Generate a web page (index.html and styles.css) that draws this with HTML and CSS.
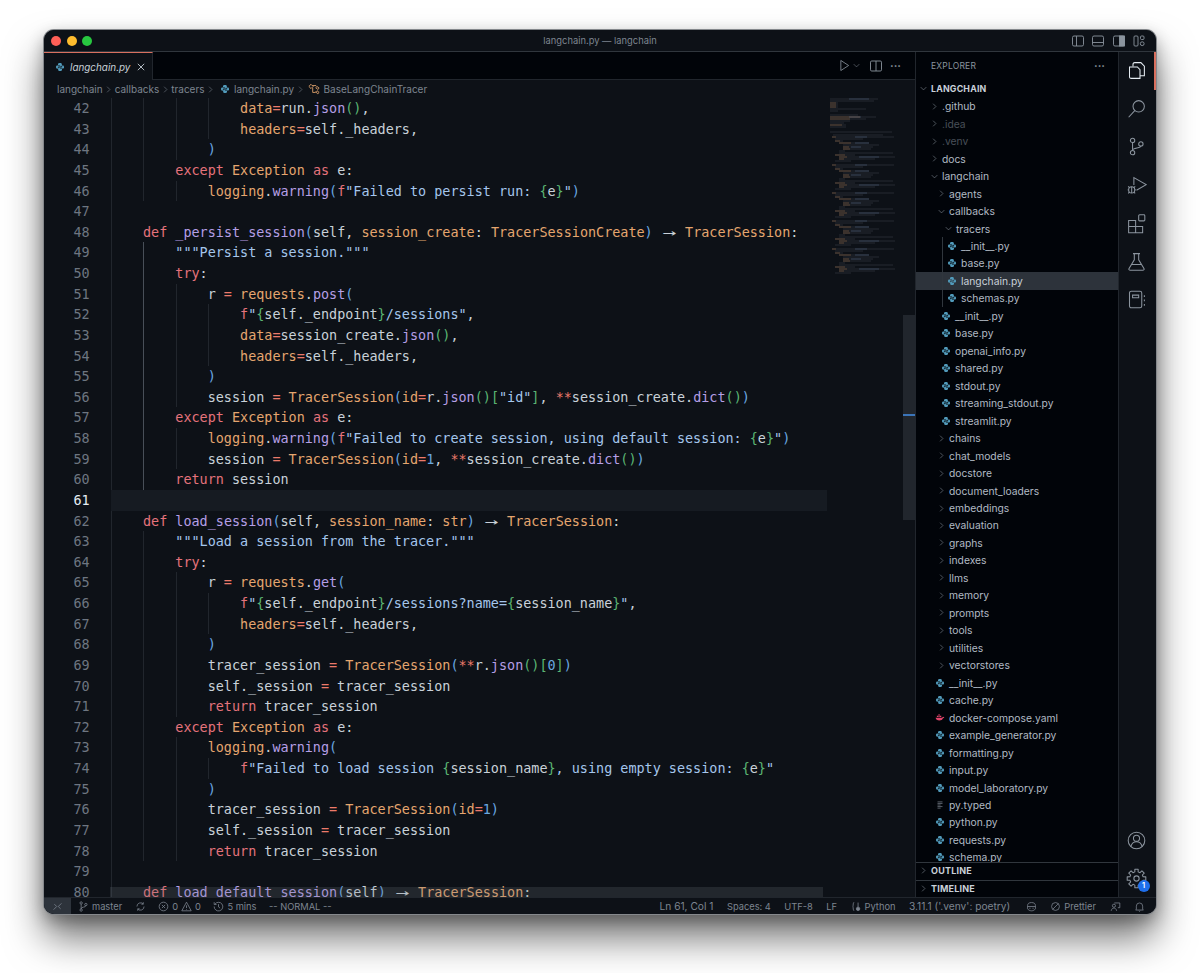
FILE: index.html
```html
<!DOCTYPE html>
<html lang="en">

<head>
    <meta charset="UTF-8">
    <title>langchain.py — langchain</title>
    <link rel="stylesheet" href="styles.css">
</head>

<body>
    <svg class="defs" width="0" height="0">
        <symbol id="py" viewBox="0 0 16 16">
            <path d="M8 1.5c-2.2 0-3.2.7-3.2 2.1v1.3h3.4v.7H3.7c-1.4 0-2.2 1-2.2 2.5 0 1.4.7 2.5 1.9 2.5h1.2V9c0-1 .8-1.7 1.8-1.7h3c.9 0 1.6-.7 1.6-1.6V3.6c0-1.4-1.2-2.1-3-2.1z" />
            <g transform="rotate(180 8 8)">
                <path d="M8 1.5c-2.2 0-3.2.7-3.2 2.1v1.3h3.4v.7H3.7c-1.4 0-2.2 1-2.2 2.5 0 1.4.7 2.5 1.9 2.5h1.2V9c0-1 .8-1.7 1.8-1.7h3c.9 0 1.6-.7 1.6-1.6V3.6c0-1.4-1.2-2.1-3-2.1z" />
            </g>
        </symbol>
        <symbol id="right" viewBox="0 0 16 16">
            <path d="M5.5 3l5 5-5 5" fill="none" stroke="currentColor" />
        </symbol>
        <symbol id="down" viewBox="0 0 16 16">
            <path d="M3 5.5l5 5 5-5" fill="none" stroke="currentColor" />
        </symbol>
        <symbol id="cog" viewBox="0 0 16 16">
            <polygon transform="translate(8 8)" fill="none" stroke="currentColor" stroke-width=".8" stroke-linejoin="round" points="-1.26,-5.04 -1.25,-7.09 1.25,-7.09 1.26,-5.04 2.67,-4.45 4.13,-5.9 5.9,-4.13 4.45,-2.67 5.04,-1.26 7.09,-1.25 7.09,1.25 5.04,1.26 4.45,2.67 5.9,4.13 4.13,5.9 2.67,4.45 1.26,5.04 1.25,7.09 -1.25,7.09 -1.26,5.04 -2.67,4.45 -4.13,5.9 -5.9,4.13 -4.45,2.67 -5.04,1.26 -7.09,1.25 -7.09,-1.25 -5.04,-1.26 -4.45,-2.67 -5.9,-4.13 -4.13,-5.9 -2.67,-4.45" />
            <circle cx="8" cy="8" r="2" fill="none" stroke="currentColor" stroke-width=".8" />
        </symbol>
    </svg>

    <div class="window">
        <div class="titlebar">
            <div class="lights"><i class="red"></i><i class="yellow"></i><i class="green"></i></div>
            <div class="title">langchain.py — langchain</div>
            <div class="layout-icons">
                <svg viewBox="0 0 14 14"><rect x="1.5" y="2" width="11" height="10" rx="1.5" /><path d="M5.5 2v10" /></svg>
                <svg viewBox="0 0 14 14"><rect x="1.5" y="2" width="11" height="10" rx="1.5" /><path d="M1.5 8.5h11" /></svg>
                <svg viewBox="0 0 14 14"><rect x="1.5" y="2" width="11" height="10" rx="1.5" /><rect class="fill" x="7.5" y="2" width="5" height="10" /></svg>
                <svg viewBox="0 0 14 14"><rect x="2" y="2" width="4" height="10" rx="1" /><rect x="8.5" y="2" width="3.5" height="3.5" rx="1" /><circle cx="10.2" cy="9.7" r="1.9" /></svg>
            </div>
        </div>

        <div class="main">
            <div class="editor">
                <div class="tabs">
                    <div class="tab">
                        <svg class="py"><use href="#py" /></svg>
                        <span class="tab-name">langchain.py</span>
                        <svg class="tab-close" viewBox="0 0 10 10"><path d="M1 1l8 8M9 1l-8 8" /></svg>
                    </div>
                    <div class="tab-actions">
                        <svg class="play" viewBox="0 0 12 14"><path d="M2 1.5l8.5 5.5L2 12.5z" /></svg>
                        <svg class="play-more"><use href="#down" /></svg>
                        <svg class="split" viewBox="0 0 14 14"><rect x="1.5" y="2" width="11" height="10" rx="1.2" /><path d="M7 2v10" /></svg>
                        <span class="dots">···</span>
                    </div>
                </div>
                <div class="crumbs">
                    <span>langchain</span>
                    <svg class="sep"><use href="#right" /></svg>
                    <span>callbacks</span>
                    <svg class="sep"><use href="#right" /></svg>
                    <span>tracers</span>
                    <svg class="sep"><use href="#right" /></svg>
                    <svg class="py"><use href="#py" /></svg>
                    <span>langchain.py</span>
                    <svg class="sep"><use href="#right" /></svg>
                    <svg class="class-icon" viewBox="0 0 14 14"><path d="M1 4l2.500-2.500L6 4 3.500 6.500zM9 5.500l1.500-1.500L13 6l-1.500 1.500zM9 10.500L10.500 9l2.500 2-1.500 1.500zM5 3h4.500M5.500 5.500V11H9" /></svg>
                    <span>BaseLangChainTracer</span>
                </div>

                <div class="code-area">
                    <div class="code">
                        <div class="line"><span class="num">42</span><div class="src g4">                <span class="p">data</span><span class="o">=</span>run.<span class="f">json</span><span class="g">()</span>,</div></div>
                        <div class="line"><span class="num">43</span><div class="src g4">                <span class="p">headers</span><span class="o">=</span>self._headers,</div></div>
                        <div class="line"><span class="num">44</span><div class="src g3">            <span class="b">)</span></div></div>
                        <div class="line"><span class="num">45</span><div class="src g2">        <span class="k">except</span> <span class="c">Exception</span> <span class="k">as</span> e:</div></div>
                        <div class="line"><span class="num">46</span><div class="src g3">            <span class="c">logging</span>.<span class="f">warning</span><span class="b">(</span><span class="k">f</span><span class="s">"Failed to persist run: </span><span class="g">{</span>e<span class="g">}</span><span class="s">"</span><span class="b">)</span></div></div>
                        <div class="line"><span class="num">47</span><div class="src g1"></div></div>
                        <div class="line"><span class="num">48</span><div class="src g1">    <span class="k">def</span> <span class="f">_persist_session</span><span class="b">(</span>self, <span class="p">session_create</span>: <span class="c">TracerSessionCreate</span><span class="b">)</span> <span class="arrow">→</span> <span class="c">TracerSession</span>:</div></div>
                        <div class="line"><span class="num">49</span><div class="src g2 act">        <span class="s">"""Persist a session."""</span></div></div>
                        <div class="line"><span class="num">50</span><div class="src g2 act">        <span class="k">try</span>:</div></div>
                        <div class="line"><span class="num">51</span><div class="src g3 act">            r <span class="o">=</span> <span class="c">requests</span>.<span class="f">post</span><span class="b">(</span></div></div>
                        <div class="line"><span class="num">52</span><div class="src g4 act">                <span class="k">f</span><span class="s">"</span><span class="g">{</span>self._endpoint<span class="g">}</span><span class="s">/sessions"</span>,</div></div>
                        <div class="line"><span class="num">53</span><div class="src g4 act">                <span class="p">data</span><span class="o">=</span>session_create.<span class="f">json</span><span class="g">()</span>,</div></div>
                        <div class="line"><span class="num">54</span><div class="src g4 act">                <span class="p">headers</span><span class="o">=</span>self._headers,</div></div>
                        <div class="line"><span class="num">55</span><div class="src g3 act">            <span class="b">)</span></div></div>
                        <div class="line"><span class="num">56</span><div class="src g3 act">            session <span class="o">=</span> <span class="c">TracerSession</span><span class="b">(</span><span class="p">id</span><span class="o">=</span>r.<span class="f">json</span><span class="g">()[</span><span class="s">"id"</span><span class="g">]</span>, <span class="o">**</span>session_create.<span class="f">dict</span><span class="g">()</span><span class="b">)</span></div></div>
                        <div class="line"><span class="num">57</span><div class="src g2 act">        <span class="k">except</span> <span class="c">Exception</span> <span class="k">as</span> e:</div></div>
                        <div class="line"><span class="num">58</span><div class="src g3 act">            <span class="c">logging</span>.<span class="f">warning</span><span class="b">(</span><span class="k">f</span><span class="s">"Failed to create session, using default session: </span><span class="g">{</span>e<span class="g">}</span><span class="s">"</span><span class="b">)</span></div></div>
                        <div class="line"><span class="num">59</span><div class="src g3 act">            session <span class="o">=</span> <span class="c">TracerSession</span><span class="b">(</span><span class="p">id</span><span class="o">=</span><span class="b">1</span>, <span class="o">**</span>session_create.<span class="f">dict</span><span class="g">()</span><span class="b">)</span></div></div>
                        <div class="line"><span class="num">60</span><div class="src g2 act">        <span class="k">return</span> session</div></div>
                        <div class="line current"><span class="num">61</span><div class="src"></div></div>
                        <div class="line"><span class="num">62</span><div class="src g1">    <span class="k">def</span> <span class="f">load_session</span><span class="b">(</span>self, <span class="p">session_name</span>: <span class="c">str</span><span class="b">)</span> <span class="arrow">→</span> <span class="c">TracerSession</span>:</div></div>
                        <div class="line"><span class="num">63</span><div class="src g2">        <span class="s">"""Load a session from the tracer."""</span></div></div>
                        <div class="line"><span class="num">64</span><div class="src g2">        <span class="k">try</span>:</div></div>
                        <div class="line"><span class="num">65</span><div class="src g3">            r <span class="o">=</span> <span class="c">requests</span>.<span class="f">get</span><span class="b">(</span></div></div>
                        <div class="line"><span class="num">66</span><div class="src g4">                <span class="k">f</span><span class="s">"</span><span class="g">{</span>self._endpoint<span class="g">}</span><span class="s">/sessions?name=</span><span class="g">{</span>session_name<span class="g">}</span><span class="s">"</span>,</div></div>
                        <div class="line"><span class="num">67</span><div class="src g4">                <span class="p">headers</span><span class="o">=</span>self._headers,</div></div>
                        <div class="line"><span class="num">68</span><div class="src g3">            <span class="b">)</span></div></div>
                        <div class="line"><span class="num">69</span><div class="src g3">            tracer_session <span class="o">=</span> <span class="c">TracerSession</span><span class="b">(</span><span class="o">**</span>r.<span class="f">json</span><span class="g">()[</span><span class="b">0</span><span class="g">]</span><span class="b">)</span></div></div>
                        <div class="line"><span class="num">70</span><div class="src g3">            self._session <span class="o">=</span> tracer_session</div></div>
                        <div class="line"><span class="num">71</span><div class="src g3">            <span class="k">return</span> tracer_session</div></div>
                        <div class="line"><span class="num">72</span><div class="src g2">        <span class="k">except</span> <span class="c">Exception</span> <span class="k">as</span> e:</div></div>
                        <div class="line"><span class="num">73</span><div class="src g3">            <span class="c">logging</span>.<span class="f">warning</span><span class="b">(</span></div></div>
                        <div class="line"><span class="num">74</span><div class="src g4">                <span class="k">f</span><span class="s">"Failed to load session </span><span class="g">{</span>session_name<span class="g">}</span><span class="s">, using empty session: </span><span class="g">{</span>e<span class="g">}</span><span class="s">"</span></div></div>
                        <div class="line"><span class="num">75</span><div class="src g3">            <span class="b">)</span></div></div>
                        <div class="line"><span class="num">76</span><div class="src g3">            tracer_session <span class="o">=</span> <span class="c">TracerSession</span><span class="b">(</span><span class="p">id</span><span class="o">=</span><span class="b">1</span><span class="b">)</span></div></div>
                        <div class="line"><span class="num">77</span><div class="src g3">            self._session <span class="o">=</span> tracer_session</div></div>
                        <div class="line"><span class="num">78</span><div class="src g3">            <span class="k">return</span> tracer_session</div></div>
                        <div class="line"><span class="num">79</span><div class="src g1"></div></div>
                        <div class="line"><span class="num">80</span><div class="src g1">    <span class="k">def</span> <span class="f">load_default_session</span><span class="b">(</span>self<span class="b">)</span> <span class="arrow">→</span> <span class="c">TracerSession</span>:</div></div>
                        <div class="hscroll"></div>
                    </div>

                    <div class="minimap">
                        <svg viewBox="0 0 76 180" width="76" height="180">
                            <defs>
                                <g id="mini-block">
                                    <path class="m-grey" d="M5 1h62M8 3h28M8 5h8M12 7h30M16 9h36M16 11h30M16 13h28M12 15h6M12 17h54M8 19h20M12 21h56M12 23h36M8 25h16" />
                                    <path class="m-orange" d="M5 1h4M8 5h5M12 7h12M16 11h6M16 13h7M8 19h10M12 21h8M12 23h5" />
                                    <path class="m-blue" d="M28 1h12M28 7h14M24 11h10M32 21h20" />
                                </g>
                            </defs>
                            <path class="m-grey" d="M3 1h48M3 3h44M3 5h8M3 7h8M3 9h8M3 11h36M3 13h8M3 17h28M3 19h46M3 21h36M3 23h20M3 25h14M3 27h16M3 29h16" />
                            <path class="m-orange" d="M3 5h6M3 7h6M3 9h6M3 19h30M3 21h20M3 27h12" />
                            <path class="m-blue" d="M22 1h20M22 19h12" />
                            <path class="m-grey" d="M3 34h62M6 37h50" />
                            <use href="#mini-block" y="38" />
                            <use href="#mini-block" y="66" />
                            <use href="#mini-block" y="94" />
                            <use href="#mini-block" y="122" />
                            <use href="#mini-block" y="150" />
                        </svg>
                    </div>
                    <div class="scrollbar">
                        <div class="slider"></div>
                        <div class="cursor-mark"></div>
                    </div>
                </div>
            </div>

            <div class="sidebar">
                <div class="side-head"><span>EXPLORER</span><span class="dots">···</span></div>
                <div class="root"><svg class="chev"><use href="#down" /></svg>LANGCHAIN</div>
                <div class="tree">
                    <div class="row d1"><svg class="chev"><use href="#right" /></svg>.github</div>
                    <div class="row d1 dim"><svg class="chev"><use href="#right" /></svg>.idea</div>
                    <div class="row d1 dim"><svg class="chev"><use href="#right" /></svg>.venv</div>
                    <div class="row d1"><svg class="chev"><use href="#right" /></svg>docs</div>
                    <div class="row d1"><svg class="chev"><use href="#down" /></svg>langchain</div>
                    <div class="row d2"><svg class="chev"><use href="#right" /></svg>agents</div>
                    <div class="row d2"><svg class="chev"><use href="#down" /></svg>callbacks</div>
                    <div class="row d3"><svg class="chev"><use href="#down" /></svg>tracers</div>
                    <div class="row f3 guide"><svg class="py"><use href="#py" /></svg>__init__.py</div>
                    <div class="row f3 guide"><svg class="py"><use href="#py" /></svg>base.py</div>
                    <div class="row f3 guide selected"><svg class="py"><use href="#py" /></svg>langchain.py</div>
                    <div class="row f3 guide"><svg class="py"><use href="#py" /></svg>schemas.py</div>
                    <div class="row f2"><svg class="py"><use href="#py" /></svg>__init__.py</div>
                    <div class="row f2"><svg class="py"><use href="#py" /></svg>base.py</div>
                    <div class="row f2"><svg class="py"><use href="#py" /></svg>openai_info.py</div>
                    <div class="row f2"><svg class="py"><use href="#py" /></svg>shared.py</div>
                    <div class="row f2"><svg class="py"><use href="#py" /></svg>stdout.py</div>
                    <div class="row f2"><svg class="py"><use href="#py" /></svg>streaming_stdout.py</div>
                    <div class="row f2"><svg class="py"><use href="#py" /></svg>streamlit.py</div>
                    <div class="row d2"><svg class="chev"><use href="#right" /></svg>chains</div>
                    <div class="row d2"><svg class="chev"><use href="#right" /></svg>chat_models</div>
                    <div class="row d2"><svg class="chev"><use href="#right" /></svg>docstore</div>
                    <div class="row d2"><svg class="chev"><use href="#right" /></svg>document_loaders</div>
                    <div class="row d2"><svg class="chev"><use href="#right" /></svg>embeddings</div>
                    <div class="row d2"><svg class="chev"><use href="#right" /></svg>evaluation</div>
                    <div class="row d2"><svg class="chev"><use href="#right" /></svg>graphs</div>
                    <div class="row d2"><svg class="chev"><use href="#right" /></svg>indexes</div>
                    <div class="row d2"><svg class="chev"><use href="#right" /></svg>llms</div>
                    <div class="row d2"><svg class="chev"><use href="#right" /></svg>memory</div>
                    <div class="row d2"><svg class="chev"><use href="#right" /></svg>prompts</div>
                    <div class="row d2"><svg class="chev"><use href="#right" /></svg>tools</div>
                    <div class="row d2"><svg class="chev"><use href="#right" /></svg>utilities</div>
                    <div class="row d2"><svg class="chev"><use href="#right" /></svg>vectorstores</div>
                    <div class="row f1"><svg class="py"><use href="#py" /></svg>__init__.py</div>
                    <div class="row f1"><svg class="py"><use href="#py" /></svg>cache.py</div>
                    <div class="row f1"><svg class="py docker" viewBox="0 0 16 16"><path d="M1 7.5h10.5c.3-1 1-1.5 1.7-1.5.3.6 1.2.8 1.8.7-.4 1-1.2 1.6-2.2 1.7-1 2.4-3 3.6-5.8 3.6-3.4 0-5.600-1.700-6-4.500zM3 4.500h2v2H3zM5.500 4.500h2v2h-2zM8 4.500h2v2H8zM5.500 2h2v2h-2z" /></svg>docker-compose.yaml</div>
                    <div class="row f1"><svg class="py"><use href="#py" /></svg>example_generator.py</div>
                    <div class="row f1"><svg class="py"><use href="#py" /></svg>formatting.py</div>
                    <div class="row f1"><svg class="py"><use href="#py" /></svg>input.py</div>
                    <div class="row f1"><svg class="py"><use href="#py" /></svg>model_laboratory.py</div>
                    <div class="row f1"><svg class="py lines" viewBox="0 0 16 16"><path d="M4 3h8M4 5.500h8M4 8h5M4 10.500h8M4 13h5" /></svg>py.typed</div>
                    <div class="row f1"><svg class="py"><use href="#py" /></svg>python.py</div>
                    <div class="row f1"><svg class="py"><use href="#py" /></svg>requests.py</div>
                    <div class="row f1"><svg class="py"><use href="#py" /></svg>schema.py</div>
                </div>
                <div class="panel"><svg class="chev"><use href="#right" /></svg>OUTLINE</div>
                <div class="panel"><svg class="chev"><use href="#right" /></svg>TIMELINE</div>
            </div>

            <div class="activity">
                <div class="act-top">
                    <svg class="on" viewBox="0 0 24 24"><path d="M10 3h7l4 4v11h-5M10 3c-1 0-2 .5-2 2v2M4 8h9l3 3v10H6c-1.500 0-2-1-2-2z" /></svg>
                    <svg viewBox="0 0 24 24"><circle cx="14.500" cy="9.500" r="6.500" /><path d="M10 14.500L3 22" /></svg>
                    <svg viewBox="0 0 24 24"><circle cx="7.500" cy="5" r="2.500" /><circle cx="7.500" cy="19" r="2.500" /><circle cx="17" cy="9" r="2.500" /><path d="M7.500 7.500v9M17 11.500c0 3-9.500 1.500-9.500 5" /></svg>
                    <svg viewBox="0 0 24 24"><path d="M9 11.500V3l14 8-11 6.500" /><circle cx="6.500" cy="17" r="3.500" /><path d="M6.500 13.500v7M2 17h1M10 17h1M2.500 13l1.500 1.500M10.500 13L9 14.500M2.500 21L4 19.500M10.500 21L9 19.500" /></svg>
                    <svg viewBox="0 0 24 24"><path d="M3 8.500h8v14H3zM3 15.500h16v7h-8M11 8.500v7" /><rect x="14.500" y="2" width="7" height="7" rx="1" /></svg>
                    <svg viewBox="0 0 24 24"><path d="M8 3h8M9.500 3v7L3.500 20c-.5 1 0 2 1.500 2h14c1.500 0 2-1 1.500-2l-6-10V3M6.500 15.500h11" /></svg>
                    <svg viewBox="0 0 24 24"><rect x="4" y="2.500" width="14" height="19" rx="2" /><path d="M7.500 7h7v3h-7zM21 7v2M21 12v2M21 17v2" /></svg>
                </div>
                <div class="act-bottom">
                    <svg viewBox="0 0 24 24"><circle cx="12" cy="12" r="9.500" /><circle cx="12" cy="9.500" r="3.500" /><path d="M5.500 19c1-3.500 3.500-5.500 6.500-5.500s5.500 2 6.500 5.500" /></svg>
                    <div class="gear">
                        <svg><use href="#cog" /></svg>
                        <span class="badge">1</span>
                    </div>
                </div>
            </div>
        </div>

        <div class="status">
            <div class="remote"><svg viewBox="0 0 14 14"><path d="M2 11l4-4-3-3M12 3L8 7l3 3" /></svg></div>
            <div class="st-left">
                <span class="st-item"><svg viewBox="0 0 14 14"><circle cx="4" cy="2.500" r="1.500" /><circle cx="4" cy="11.500" r="1.500" /><circle cx="10" cy="4.500" r="1.500" /><path d="M4 4v6M10 6c0 2.500-6 1-6 4" /></svg>master</span>
                <span class="st-item"><svg viewBox="0 0 14 14"><path d="M2.500 7a4.500 4.500 0 0 1 8-3M11.500 7a4.500 4.500 0 0 1-8 3M10.500 1.500V4H8M3.500 12.500V10H6" /></svg></span>
                <span class="st-item"><svg viewBox="0 0 14 14"><circle cx="7" cy="7" r="5.500" /><path d="M5 5l4 4M9 5l-4 4" /></svg>0<svg viewBox="0 0 14 14"><path d="M7 1.500l6 11H1zM7 5.500v3.500M7 10.500v.8" /></svg>0</span>
                <span class="st-item"><svg viewBox="0 0 14 14"><path d="M2.500 4A5.500 5.500 0 1 1 1.500 7M1.500 1.500V4.500H4.500M7 4v3.500l2 1.500" /></svg>5 mins</span>
                <span class="st-item">-- NORMAL --</span>
            </div>
            <div class="st-right">
                <span class="wide">Ln 61, Col 1</span>
                <span>Spaces: 4</span>
                <span>UTF-8</span>
                <span>LF</span>
                <span class="st-item"><svg viewBox="0 0 14 14"><path d="M4 1.500C2.500 2 3 5 2.500 7 3 9 2.500 12 4 12.500" /><circle cx="9" cy="10" r="2.200" class="fill" /><path d="M9 2v6" /></svg>Python</span>
                <span class="wide">3.11.1 ('.venv': poetry)</span>
                <span class="st-item copilot"><svg viewBox="0 0 14 14"><path d="M2 6c0-3 2-4 5-4s5 1 5 4v4c-1 1.500-3 2.500-5 2.500S3 11.500 2 10zM2 7h10M5 8.500v1.500M9 8.500v1.500" /></svg></span>
                <span class="st-item"><svg viewBox="0 0 14 14"><circle cx="7" cy="7" r="5" /><path d="M3.500 10.500l7-7" /></svg>Prettier</span>
                <span class="st-item"><svg viewBox="0 0 14 14"><circle cx="5" cy="6" r="2" /><path d="M1.500 12.500c.5-2.500 2-3.500 3.500-3.500s3 1 3.500 3.500M5.500 2.500h7v6H10" /></svg></span>
                <span class="st-item"><svg viewBox="0 0 14 14"><path d="M3 10.500V6.500a4 4 0 0 1 8 0v4l1 1H2zM6 12.500c.3.800 1.700.800 2 0" /></svg></span>
            </div>
        </div>
    </div>
</body>

</html>
```

FILE: styles.css
```css
* {
    box-sizing: border-box;
}

html,
body {
    margin: 0;
    height: 973px;
    overflow: hidden;
    background: #fff;
}

body {
    padding: 30px 44px 0;
    font-family: Inter, "Noto Sans", sans-serif;
}

.defs {
    position: absolute;
}

.window {
    width: 1112px;
    height: 884px;
    display: flex;
    flex-direction: column;
    background: #0d1117;
    border-radius: 10px;
    overflow: hidden;
    box-shadow: 0 0 0 1px #85888c, 0 24px 38px rgba(0, 0, 0, .55), 0 6px 16px rgba(0, 0, 0, .3);
}

/* title bar */
.titlebar {
    height: 22px;
    flex: none;
    display: flex;
    align-items: center;
    justify-content: space-between;
    padding: 0 10px 0 7px;
    background: #0d1117;
    border-bottom: 1px solid #30363d;
    position: relative;
}

.lights {
    display: flex;
    gap: 5.5px;
    margin-top: 1px;
}

.lights i {
    width: 10px;
    height: 10px;
    border-radius: 50%;
}

.red {
    background: #ff5f57;
}

.yellow {
    background: #febc2e;
}

.green {
    background: #28c840;
}

.title {
    position: absolute;
    left: 0;
    right: 0;
    text-align: center;
    font-size: 9.35px;
    color: #7d8590;
}

.layout-icons {
    display: flex;
    gap: 6.5px;
}

.layout-icons svg {
    width: 14px;
    height: 14px;
    fill: none;
    stroke: #8b949e;
    stroke-width: .9;
}

.layout-icons .fill {
    fill: #8b949e;
}

.main {
    flex: 1;
    display: flex;
    min-height: 0;
}

/* editor */
.editor {
    width: 871px;
    flex: none;
    display: flex;
    flex-direction: column;
}

.tabs {
    height: 28px;
    flex: none;
    display: flex;
    justify-content: space-between;
    background: #010409;
    border-bottom: 1px solid #21262d;
}

.tab {
    width: 109px;
    height: 28px;
    display: flex;
    align-items: center;
    padding-left: 11px;
    background: #0d1117;
    border-top: 1px solid #d9705f;
    border-right: 1px solid #21262d;
}

.tab-name {
    font-size: 9.9px;
    font-style: italic;
    color: #c9d1d9;
    margin-left: 5px;
}

.py {
    width: 10px;
    height: 10px;
    flex: none;
    fill: #519aba;
}

.tab-close {
    width: 8px;
    height: 8px;
    margin-left: 7px;
    fill: none;
    stroke: #c9d1d9;
    stroke-width: 1.1;
}

.tab-actions {
    display: flex;
    align-items: center;
    padding-right: 14px;
    color: #8b949e;
}

.tab-actions svg {
    fill: none;
    stroke: #8b949e;
    stroke-width: .9;
}

.play {
    width: 11px;
    height: 13px;
}

.play-more {
    width: 9px;
    height: 9px;
    margin: 0 8px 0 2.5px;
}

.split {
    width: 14px;
    height: 14px;
}

.dots {
    font-size: 11px;
    font-weight: 700;
    color: #8b949e;
    margin-left: 6.5px;
}

.crumbs {
    height: 18px;
    flex: none;
    display: flex;
    align-items: center;
    gap: 1.5px;
    padding-left: 13px;
    font-size: 10px;
    color: #7d8590;
}

.sep {
    width: 9px;
    height: 9px;
    color: #7d8590;
}

.crumbs .py {
    margin: 0 3px;
}

.class-icon {
    width: 12px;
    height: 12px;
    margin: 0 2px;
    fill: none;
    stroke: #e5a66f;
    stroke-width: 1;
}

.code-area {
    flex: 1;
    min-height: 0;
    display: flex;
}

.code {
    width: 783px;
    flex: none;
    overflow: hidden;
    position: relative;
    font-family: "DejaVu Sans Mono", "Liberation Mono", monospace;
    font-size: 13.45px;
    color: #c9d1d9;
    --cw: 8.1px;
}

.line {
    display: flex;
    height: 20.63px;
    line-height: 20.63px;
}

.num {
    width: 66.6px;
    flex: none;
    padding: 1px 21px 0 0;
    text-align: right;
    color: #6e7681;
}

.src {
    flex: 1;
    padding-top: 1px;
    white-space: pre;
    background-image: repeating-linear-gradient(90deg, #21262d 0 1px, transparent 1px 32.4px);
    background-repeat: no-repeat;
    background-size: calc(var(--cw) * 4 * var(--n, 0)) 100%;
}

.g1 {
    --n: 1;
}

.g2 {
    --n: 2;
}

.g3 {
    --n: 3;
}

.g4 {
    --n: 4;
}

.src.act {
    background-image: linear-gradient(#484f58, #484f58), repeating-linear-gradient(90deg, #21262d 0 1px, transparent 1px 32.4px);
    background-position: 32.4px 0, 0 0;
    background-size: 1px 100%, calc(var(--cw) * 4 * var(--n, 0)) 100%;
}

.current .num {
    color: #e6edf3;
}

.current .src {
    background: #161b22;
}

.k {
    color: #e5737c;
}

.c,
.p {
    color: #e5a66f;
}

.f {
    color: #b59fe6;
}

.s {
    color: #a5c6ec;
}

.o {
    color: #ec7a6a;
}

.b {
    color: #6aa8e0;
}

.g {
    color: #5bb573;
}

.arrow {
    display: inline-block;
    width: 2ch;
    text-align: center;
    transform: scaleX(1.7);
}

.hscroll {
    position: absolute;
    left: 66px;
    right: 4px;
    bottom: 0;
    height: 10px;
    background: rgba(110, 118, 129, .22);
}

.minimap {
    width: 76px;
    flex: none;
    overflow: hidden;
}

.minimap svg {
    display: block;
    fill: none;
}

.m-grey {
    stroke: #6e7681;
    stroke-width: .6;
    opacity: .45;
}

.m-orange {
    stroke: #c98a55;
    stroke-width: .6;
    opacity: .65;
}

.m-blue {
    stroke: #7fa6d0;
    stroke-width: .6;
    opacity: .5;
}

.scrollbar {
    width: 12px;
    flex: none;
    position: relative;
}

.slider {
    position: absolute;
    top: 217px;
    left: 0;
    right: 0;
    height: 205px;
    background: #21262d;
}

.cursor-mark {
    position: absolute;
    top: 316px;
    left: 0;
    right: 0;
    height: 2px;
    background: #3b74b8;
}

/* sidebar */
.sidebar {
    width: 204px;
    flex: none;
    display: flex;
    flex-direction: column;
    background: #010409;
    border-left: 1px solid #21262d;
    border-right: 1px solid #21262d;
    font-size: 10.3px;
    color: #b1bac4;
}

.side-head {
    height: 28px;
    flex: none;
    display: flex;
    align-items: center;
    justify-content: space-between;
    padding: 0 13px 0 15px;
    font-size: 8.5px;
    letter-spacing: .2px;
    color: #8b949e;
}

.side-head .dots {
    letter-spacing: 0;
}

.root {
    height: 17.5px;
    flex: none;
    display: flex;
    align-items: center;
    padding-left: 3px;
    font-size: 8.8px;
    font-weight: 700;
    letter-spacing: .2px;
    color: #c9d1d9;
}

.chev {
    width: 9px;
    height: 9px;
    margin-right: 3px;
    flex: none;
    color: #8b949e;
}

.tree {
    flex: 1;
    min-height: 0;
    overflow: hidden;
}

.row {
    height: 17.47px;
    display: flex;
    align-items: center;
    white-space: nowrap;
    position: relative;
}

.row .py {
    margin-right: 4px;
}

.d1 {
    padding-left: 14px;
}

.d2 {
    padding-left: 21px;
}

.d3 {
    padding-left: 28px;
}

.f1 {
    padding-left: 19px;
}

.f2 {
    padding-left: 25px;
}

.f3 {
    padding-left: 31px;
}

.dim {
    color: #484f58;
}

.guide::before {
    content: "";
    position: absolute;
    left: 26px;
    top: 0;
    bottom: 0;
    width: 1px;
    background: #30363d;
}

.selected {
    background: #2d333b;
    color: #c9d1d9;
}

.docker {
    fill: #e0446a;
}

.lines {
    fill: none;
    stroke: #8b949e;
    stroke-width: 1;
}

.panel {
    height: 17.5px;
    flex: none;
    display: flex;
    align-items: center;
    padding: 0 0 1px 3px;
    font-size: 9px;
    font-weight: 700;
    letter-spacing: .2px;
    color: #c9d1d9;
    border-top: 1px solid #30363d;
}

/* activity bar */
.activity {
    flex: 1;
    display: flex;
    flex-direction: column;
    justify-content: space-between;
    background: #0d1117;
    position: relative;
}

.activity::before {
    content: "";
    position: absolute;
    top: 0;
    right: 0;
    width: 2px;
    height: 38px;
    background: #d9705f;
}

.activity svg {
    width: 21px;
    height: 21px;
    fill: none;
    stroke: #8b949e;
    stroke-width: 1.2;
}

.activity .on {
    stroke: #e6edf3;
}

.act-top {
    display: flex;
    flex-direction: column;
    align-items: center;
    gap: 17.2px;
    padding-top: 8px;
    padding-right: 3px;
}

.act-bottom {
    display: flex;
    flex-direction: column;
    align-items: center;
    gap: 17px;
    padding-bottom: 8px;
    padding-right: 3px;
}

.gear {
    width: 21px;
    height: 21px;
    position: relative;
}

.gear svg {
    display: block;
    stroke: none;
    color: #8b949e;
}

.badge {
    position: absolute;
    right: -3px;
    bottom: -3px;
    width: 12px;
    height: 12px;
    border-radius: 50%;
    background: #1f6feb;
    color: #fff;
    font-size: 7.5px;
    font-weight: 600;
    text-align: center;
    line-height: 12px;
}

/* status bar */
.status {
    height: 17px;
    flex: none;
    display: flex;
    align-items: center;
    justify-content: space-between;
    background: #0d1117;
    border-top: 1px solid #21262d;
    font-size: 9.3px;
    color: #7d8590;
}

.status svg {
    width: 11px;
    height: 11px;
    flex: none;
    fill: none;
    stroke: #7d8590;
    stroke-width: 1;
}

.remote {
    width: 27px;
    height: 16px;
    display: flex;
    align-items: center;
    justify-content: center;
    background: #2d333b;
}

.st-left {
    flex: 1;
    display: flex;
    align-items: center;
    gap: 12.5px;
    padding-left: 7px;
}

.st-right {
    display: flex;
    align-items: center;
    gap: 13.5px;
    padding-right: 11px;
}

.st-item {
    display: flex;
    align-items: center;
    gap: 3px;
}

.wide {
    font-size: 10.2px;
}

.status .fill {
    fill: #7d8590;
}

.copilot {
    margin-left: 2px;
}
```
